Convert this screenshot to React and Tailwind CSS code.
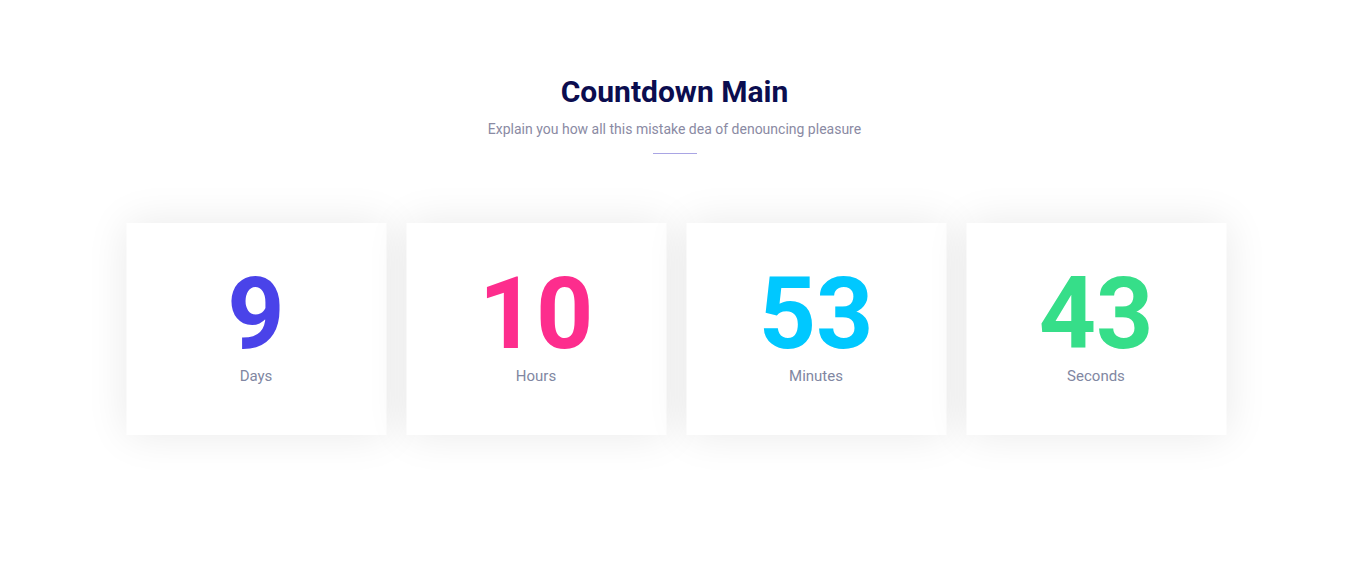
const items = [
  { value: '9', label: 'Days', color: 'text-[#4a43e9]' },
  { value: '10', label: 'Hours', color: 'text-[#fd2d8d]' },
  { value: '53', label: 'Minutes', color: 'text-[#00c8ff]' },
  { value: '43', label: 'Seconds', color: 'text-[#36de89]' },
];

export default function App() {
  return (
    <div className="min-h-[564px] bg-white font-['Roboto',sans-serif]">
      <div className="pt-[72px] text-center">
        <h2 className="text-[30px] leading-[40px] font-bold text-[#0b0d4f]">Countdown Main</h2>
        <p className="mt-[8px] text-[14px] leading-[18px] text-[#8a8aa3]">
          Explain you how all this mistake dea of denouncing pleasure
        </p>
        <div className="mx-auto mt-[15px] h-px w-[44px] bg-[#a9a5e4]" />
      </div>
      <div className="mx-auto mt-[69px] flex w-[1100px] translate-x-[1.5px] gap-5">
        {items.map((item) => (
          <div
            key={item.label}
            className="flex h-[212px] w-[260px] flex-col items-center bg-white pt-[39px] shadow-[0_0_40px_rgba(0,0,0,0.09)]"
          >
            <div className={`text-[100px] leading-[104px] font-bold ${item.color}`}>{item.value}</div>
            <div className="text-[15px] leading-[20px] text-[#8187a2]">{item.label}</div>
          </div>
        ))}
      </div>
    </div>
  );
}
